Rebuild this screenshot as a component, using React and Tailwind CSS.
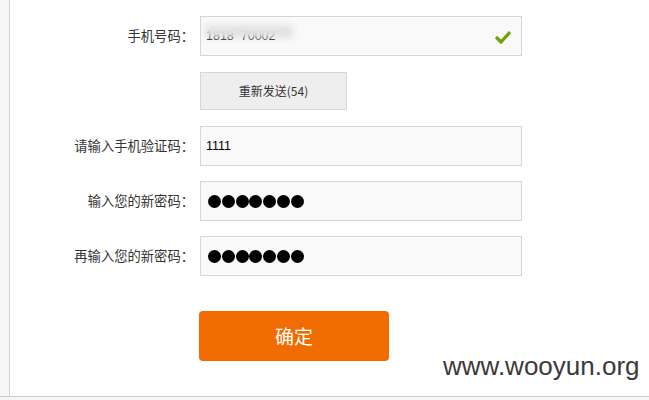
import React from "react";

const labelFont = { fontFamily: '"Noto Sans CJK SC", "Noto Sans", sans-serif' };

const Dots = () => (
  <div className="flex gap-[0.75px] pl-[7px]">
    {[0, 1, 2, 3, 4, 5, 6].map((i) => (
      <span key={i} className="block w-[13px] h-[13px] rounded-full bg-black" />
    ))}
  </div>
);

const Row = ({ label, children, className = "" }) => (
  <div className={"flex items-center " + className}>
    <div className="w-[190px] pr-[6px] text-right text-[13.3px] text-[#333]">{label}</div>
    <div className="relative flex items-center w-[322px] h-10 bg-[#f9f9f9] border border-[#d6d6d6]">
      {children}
    </div>
  </div>
);

export default function App() {
  return (
    <div
      className="relative w-[649px] h-[400px] bg-white overflow-hidden flex flex-col"
      style={labelFont}
    >
      <div className="flex flex-1">
        {/* left edge */}
        <div className="w-[10px] bg-[#f7f7f7] border-r border-[#d2d2d2]" />

        <div className="flex-1 flex flex-col pt-4">
          <Row label="手机号码：">
            <span className="pl-[5px] text-[12.5px] text-black" style={{ fontFamily: '"Liberation Sans", sans-serif' }}>
              1818&nbsp;&nbsp;70002
            </span>
            <div className="absolute left-[4px] top-[8px] w-[88px] h-[13px] bg-[#e2e2e2] blur-[3px]" />
            <svg className="absolute right-[9px] top-[13px]" width="18" height="14" viewBox="0 0 18 14">
              <polyline points="2,7 7,12 16,2" fill="none" stroke="#6aa500" strokeWidth="3.2" />
            </svg>
          </Row>

          <div className="flex mt-4">
            <div className="w-[190px]" />
            <button className="w-[147px] h-[38px] bg-[#eeeeee] border border-[#d6d6d6] text-[12px] text-[#333]">
              重新发送(54)
            </button>
          </div>

          <Row label="请输入手机验证码：" className="mt-[16px]">
            <span className="pl-[5px] text-[12.5px] text-black" style={{ fontFamily: '"Liberation Sans", sans-serif' }}>
              1111
            </span>
          </Row>

          <Row label="输入您的新密码：" className="mt-[15px]">
            <Dots />
          </Row>

          <Row label="再输入您的新密码：" className="mt-[15px]">
            <Dots />
          </Row>

          <div className="flex mt-[35px]">
            <div className="w-[189px]" />
            <button className="w-[190px] h-[50px] rounded-[4px] bg-[#f06c00] text-white text-[19px]">
              确定
            </button>
          </div>
        </div>
      </div>

      {/* bottom edge */}
      <div className="h-[4px] bg-[#f5f5f5] border-t border-[#cfcfcf]" />

      {/* watermark */}
      <div
        className="absolute left-[443px] top-[353px] text-[26px] leading-none text-[#3a3a3a]"
        style={{ fontFamily: '"Liberation Sans", Arial, sans-serif' }}
      >
        www.wooyun.org
      </div>
    </div>
  );
}
